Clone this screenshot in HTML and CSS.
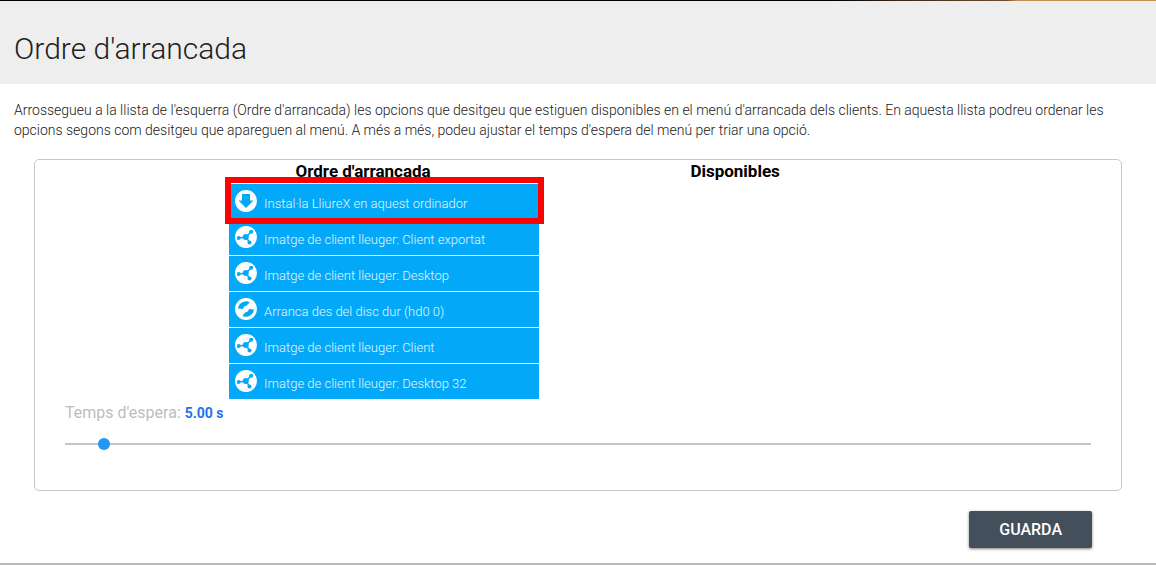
FILE: index.html
```html
<!DOCTYPE html>
<html lang="ca">
<head>
<meta charset="utf-8">
<meta name="viewport" content="width=device-width, initial-scale=1">
<title>Ordre d'arrancada</title>
<link rel="stylesheet" href="styles.css">
</head>
<body>
<svg class="sprite" aria-hidden="true">
  <symbol id="icon-install" viewBox="0 0 22 22">
    <circle cx="11" cy="11" r="11" fill="#fff"/>
    <path d="M7 4h8v6.500h3.500L11 18 3.500 10.500H7z" fill="#03a9f8"/>
  </symbol>
  <symbol id="icon-network" viewBox="0 0 22 22">
    <circle cx="11" cy="11" r="11" fill="#fff"/>
    <g fill="#03a9f8" stroke="#03a9f8">
      <path d="M4 12l7-1 5-5M11 11l3.500 5.500" fill="none" stroke-width="1.500"/>
      <g stroke="none">
        <circle cx="10.800" cy="11" r="3"/>
        <circle cx="3.700" cy="12" r="1.900"/>
        <circle cx="16.200" cy="5.800" r="2"/>
        <circle cx="14.500" cy="16.600" r="2"/>
      </g>
    </g>
  </symbol>
  <symbol id="icon-disk" viewBox="0 0 22 22">
    <circle cx="11" cy="11" r="11" fill="#fff"/>
    <g fill="#03a9f8">
      <path d="M3 10.500C3.500 6 7.500 3 12 3.200l2.800 1-3.300 3.600C9.500 8 8.300 9 8 11z"/>
      <path d="M19 11.500c-.5 4.500-4.500 7.500-9 7.300l-2.800-1 3.300-3.600c2-.2 3.200-1.200 3.500-3.200z"/>
    </g>
  </symbol>
</svg>

<div class="dialog">
  <header class="header">
    <h1 class="title">Ordre d'arrancada</h1>
  </header>
  <main class="content">
    <p class="intro">Arrossegueu a la llista de l'esquerra (Ordre d'arrancada) les opcions que desitgeu que estiguen disponibles en el menú d'arrancada dels clients. En aquesta llista podreu ordenar les opcions segons com desitgeu que apareguen al menú. A més a més, podeu ajustar el temps d'espera del menú per triar una opció.</p>
    <section class="panel">
      <div class="columns">
        <div class="column">
          <h2 class="column-title">Ordre d'arrancada</h2>
          <ul class="boot-list">
            <li class="boot-item highlighted"><svg class="icon"><use href="#icon-install"/></svg><span class="boot-label">Instal·la LliureX en aquest ordinador</span></li>
            <li class="boot-item"><svg class="icon"><use href="#icon-network"/></svg><span class="boot-label">Imatge de client lleuger: Client exportat</span></li>
            <li class="boot-item"><svg class="icon"><use href="#icon-network"/></svg><span class="boot-label">Imatge de client lleuger: Desktop</span></li>
            <li class="boot-item"><svg class="icon"><use href="#icon-disk"/></svg><span class="boot-label">Arranca des del disc dur (hd0 0)</span></li>
            <li class="boot-item"><svg class="icon"><use href="#icon-network"/></svg><span class="boot-label">Imatge de client lleuger: Client</span></li>
            <li class="boot-item"><svg class="icon"><use href="#icon-network"/></svg><span class="boot-label">Imatge de client lleuger: Desktop 32</span></li>
          </ul>
        </div>
        <div class="column">
          <h2 class="column-title">Disponibles</h2>
        </div>
      </div>
      <div class="timeout">
        <label class="timeout-label" for="timeout">Temps d'espera: <output class="timeout-value" for="timeout">5.00 s</output></label>
        <input class="slider" id="timeout" type="range" min="0" max="155" value="5">
      </div>
    </section>
    <div class="actions">
      <button class="save" type="button">GUARDA</button>
    </div>
  </main>
</div>
</body>
</html>
```
FILE: styles.css
```css
* {
  box-sizing: border-box;
}

body {
  margin: 0;
  background: #fff;
  color: #212121;
  font-family: Roboto, "Liberation Sans", sans-serif;
}

.sprite {
  position: absolute;
  width: 0;
  height: 0;
}

.dialog {
  display: flex;
  flex-direction: column;
  min-height: 100vh;
  border-bottom: 2px solid #b8b8b8;
}

.dialog::before {
  content: "";
  flex: none;
  height: 1px;
  background: linear-gradient(to right, #000 0 72%, #3a2818 78%, #6b4c2c 87%, #c08f50 88%);
}

.header {
  padding: 28px 14px 15px;
  background: #eee;
}

.title {
  margin: 0;
  font-size: 30px;
  font-weight: 300;
  line-height: 40px;
}

.content {
  padding: 16px 14px 0;
}

.intro {
  margin: 0;
  font-size: 14px;
  font-weight: 300;
  line-height: 20px;
}

.panel {
  margin: 19px 20px 0;
  padding: 0 30px 36px;
  border: 1px solid #c8c8c8;
  border-radius: 5px;
}

.columns {
  display: grid;
  grid-template-columns: repeat(2, minmax(0, 352px));
  column-gap: 20px;
  padding-left: 12%;
  margin-left: -1px;
}

.column-title {
  margin: 0;
  color: #000;
  font-size: 17px;
  font-weight: 700;
  line-height: 23px;
  text-align: center;
}

.boot-list {
  margin: 0;
  padding: 0 0 0 42px;
  list-style: none;
}

.boot-item {
  position: relative;
  display: flex;
  gap: 7px;
  height: 36px;
  padding: 6px 6px 0;
  border-top: 1px solid #fff;
  background: #03a9f8;
  color: #fff;
}

.highlighted {
  z-index: 1;
}

.highlighted::after {
  content: "";
  position: absolute;
  inset: -7px -5px -5px -4px;
  border: 6px solid #f00;
}

.icon {
  flex: none;
  width: 22px;
  height: 22px;
}

.boot-label {
  color: #e1f5fe;
  font-size: 13px;
  font-weight: 300;
  line-height: 28px;
}

.timeout {
  display: flex;
  flex-direction: column;
  gap: 11px;
  padding-top: 4px;
}

.timeout-label {
  color: #bdbdbd;
  font-size: 16px;
  line-height: 20px;
}

.timeout-value {
  color: #1f73f0;
  font-size: 14px;
  font-weight: 700;
}

.slider {
  appearance: none;
  width: 100%;
  height: 20px;
  margin: 0;
  background: linear-gradient(#c6c6c6, #c6c6c6) center / 100% 2px no-repeat;
}

.slider::-webkit-slider-thumb {
  appearance: none;
  width: 12px;
  height: 12px;
  border-radius: 50%;
  background: #2196f3;
}

.actions {
  display: flex;
  justify-content: flex-end;
  padding: 20px 50px 14px;
}

.save {
  padding: 0 30px;
  border: 0;
  border-radius: 2px;
  background: #434f5b;
  color: #fff;
  font: 500 16px/37px Roboto, "Liberation Sans", sans-serif;
  box-shadow: 0 1px 3px rgba(0, 0, 0, 0.5);
}
```
